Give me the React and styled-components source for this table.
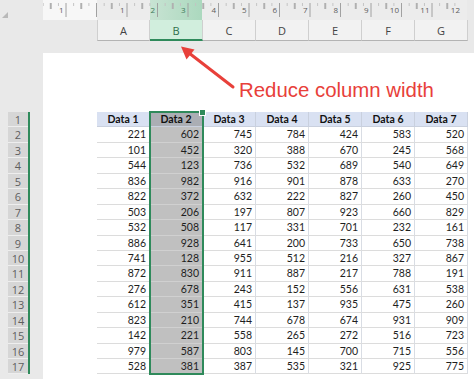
import React from "react";
import styled, { createGlobalStyle } from "styled-components";

const Global = createGlobalStyle`
  html, body { margin: 0; padding: 0; background: #e9e9e9; }
  * { box-sizing: border-box; }
`;

const GREEN = "#2f8a5b";
const ROW_H = 15.45;
const COL_W = 53;
const UNIT = 30.5;

const Sheet = styled.div`
  position: relative;
  width: 474px;
  height: 379px;
  overflow: hidden;
  background: #e9e9e9;
  display: flex;
  flex-direction: column;
`;

const Top = styled.div`
  display: flex;
  height: 41px;
`;

const Corner = styled.div`
  width: 43px;
  flex: none;
  padding: 12px 0 0 2px;
`;

const SelectAll = styled.div`
  width: 0;
  height: 0;
  border-left: 6px solid transparent;
  border-bottom: 6px solid #b9b9b9;
`;

const Rulers = styled.div`
  display: flex;
  flex-direction: column;
  width: 424px;
`;

const Ruler = styled.div`
  height: 20px;
  display: flex;
  background-color: #ececec;
  background-image:
    linear-gradient(to right, transparent 107px, rgba(170, 220, 190, 0.55) 107px, rgba(150, 210, 175, 0.75) 159px, transparent 159px),
    linear-gradient(to right, #f7f7f7 54px, transparent 54px);
  position: relative;
  overflow: hidden;
`;

const Ticks = styled.div`
  display: flex;
  width: 100%;
  margin-left: -7px;
  background-image:
    linear-gradient(to right, transparent 29.5px, #a0a0a0 29.5px, #a0a0a0 30.5px, transparent 30.5px),
    linear-gradient(to right, transparent 14.25px, #b0b0b0 14.25px, #b0b0b0 15.25px, transparent 15.25px),
    linear-gradient(to right, transparent 6.6px, #c2c2c2 6.6px, #c2c2c2 7.6px, transparent 7.6px);
  background-size: ${UNIT}px 14px, ${UNIT}px 6px, ${UNIT / 2}px 3px;
  background-position: 0 3px, 0 3px, 0 3px;
  background-repeat: repeat-x;
`;

const RulerUnit = styled.div`
  flex: none;
  width: ${UNIT}px;
  text-align: right;
  padding: 5px 3px 0 0;
  font: 8px/9px "Open Sans", sans-serif;
  color: ${(p) => (p.$hl ? "#3c7a58" : "#5c5c5c")};
`;

const HeaderRow = styled.div`
  height: 21px;
  display: flex;
  padding-left: 54px;
`;

const ColHead = styled.div`
  flex: none;
  width: ${COL_W}px;
  display: flex;
  align-items: center;
  justify-content: center;
  font: 11px "Open Sans", sans-serif;
  color: ${(p) => (p.$sel ? "#2e6e4b" : "#444")};
  background: ${(p) => (p.$sel ? "#d1eedd" : "#f2f2f2")};
  border-right: 1px solid #cfcfcf;
  border-bottom: ${(p) => (p.$sel ? `2px solid ${GREEN}` : "1px solid #b3b3b3")};
  padding-top: ${(p) => (p.$sel ? "1px" : "0")};
  &:first-child { border-left: 1px solid #cfcfcf; }
`;

const Gap = styled.div`
  height: 12px;
  flex: none;
`;

const Body = styled.div`
  flex: 1;
  display: flex;
`;

const Rail = styled.div`
  width: 43px;
  flex: none;
  padding: 59px 0 0 8px;
`;

const RowHeads = styled.div`
  width: 22px;
  border-right: 2px solid ${GREEN};
  display: flex;
  flex-direction: column;
`;

const RowHead = styled.div`
  height: ${ROW_H}px;
  background: #d6d6d6;
  border-bottom: 1px solid #eeeeee;
  text-align: center;
  font: 11px/${ROW_H}px "Open Sans", sans-serif;
  color: #5e5e5e;
`;

const Page = styled.div`
  flex: 1;
  background: #ffffff;
  padding: 59px 0 0 54px;
`;

const Table = styled.div`
  display: flex;
`;

const Column = styled.div`
  flex: none;
  width: ${COL_W}px;
  display: flex;
  flex-direction: column;
  position: relative;
  background: ${(p) => (p.$sel ? "#c0c0c0" : "transparent")};
  outline: ${(p) => (p.$sel ? `2px solid ${GREEN}` : "none")};
  outline-offset: -1px;
  z-index: ${(p) => (p.$sel ? 1 : 0)};
  &::after {
    content: "";
    display: ${(p) => (p.$sel ? "block" : "none")};
    position: absolute;
    top: -3px;
    right: -3px;
    width: 5px;
    height: 5px;
    background: ${GREEN};
    border: 1px solid #fff;
  }
`;

const HeadCell = styled.div`
  height: ${ROW_H}px;
  background: ${(p) => (p.$sel ? "#abaeb4" : "#d9e1f2")};
  border-right: 1px solid #c9d0de;
  border-bottom: 1px solid #c9d0de;
  text-align: center;
  font: bold 10.5px/${ROW_H}px Lato, sans-serif;
  color: #111;
`;

const Cell = styled.div`
  height: ${ROW_H}px;
  border-right: 1px solid ${(p) => (p.$sel ? "#b0b0b0" : "#d9dde4")};
  border-bottom: 1px solid ${(p) => (p.$sel ? "#d0d0d0" : "#dcdcdc")};
  text-align: right;
  padding-right: 3px;
  font: 10.5px/${ROW_H}px Lato, sans-serif;
  color: #1e1e1e;
`;

const Callout = styled.div`
  position: absolute;
  left: 0;
  top: 0;
  width: 474px;
  height: 110px;
  pointer-events: none;
  z-index: 5;
`;

const CalloutText = styled.div`
  position: absolute;
  left: 239px;
  top: 80px;
  font: 20.4px/20px "Liberation Sans", Arial, sans-serif;
  color: #e8403a;
  white-space: nowrap;
`;

const ArrowSvg = styled.svg`
  position: absolute;
  left: 0;
  top: 0;
`;

const cols = ["A", "B", "C", "D", "E", "F", "G"];
const rulerNums = ["1", "", "1", "2", "3", "4", "5", "6", "7", "8", "9", "10", "11", "12", ""];

const data = [
  [221, 101, 544, 836, 822, 503, 532, 886, 741, 872, 276, 612, 823, 142, 979, 528],
  [602, 452, 123, 982, 372, 206, 508, 928, 128, 830, 678, 351, 210, 221, 587, 381],
  [745, 320, 736, 916, 632, 197, 117, 641, 955, 911, 243, 415, 744, 558, 803, 387],
  [784, 388, 532, 901, 222, 807, 331, 200, 512, 887, 152, 137, 678, 265, 145, 535],
  [424, 670, 689, 878, 827, 923, 701, 733, 216, 217, 556, 935, 674, 272, 700, 321],
  [583, 245, 540, 633, 260, 660, 232, 650, 327, 788, 631, 475, 931, 516, 715, 925],
  [520, 568, 649, 270, 450, 829, 161, 738, 867, 191, 538, 260, 909, 723, 556, 775],
];

export default function App() {
  return (
    <>
      <Global />
      <Sheet>
        <Top>
          <Corner>
            <SelectAll />
          </Corner>
          <Rulers>
            <Ruler>
              <Ticks>
                {rulerNums.map((n, i) => (
                  <RulerUnit key={i} $hl={i === 3 || i === 4}>
                    {n}
                  </RulerUnit>
                ))}
              </Ticks>
            </Ruler>
            <HeaderRow>
              {cols.map((c) => (
                <ColHead key={c} $sel={c === "B"}>
                  {c}
                </ColHead>
              ))}
            </HeaderRow>
          </Rulers>
        </Top>
        <Gap />
        <Body>
          <Rail>
            <RowHeads>
              {Array.from({ length: 17 }, (_, i) => (
                <RowHead key={i}>{i + 1}</RowHead>
              ))}
            </RowHeads>
          </Rail>
          <Page>
            <Table>
              {data.map((col, ci) => (
                <Column key={ci} $sel={ci === 1}>
                  <HeadCell $sel={ci === 1}>Data {ci + 1}</HeadCell>
                  {col.map((v, ri) => (
                    <Cell key={ri} $sel={ci === 1}>
                      {v}
                    </Cell>
                  ))}
                </Column>
              ))}
            </Table>
          </Page>
        </Body>
        <Callout>
          <ArrowSvg width="474" height="110" viewBox="0 0 474 110">
            <line x1="233" y1="87" x2="189" y2="53" stroke="#e8403a" strokeWidth="3" strokeLinecap="round" />
            <polygon points="181,46.5 194.5,49.5 186.5,59.5" fill="#e8403a" />
          </ArrowSvg>
          <CalloutText>Reduce column width</CalloutText>
        </Callout>
      </Sheet>
    </>
  );
}
